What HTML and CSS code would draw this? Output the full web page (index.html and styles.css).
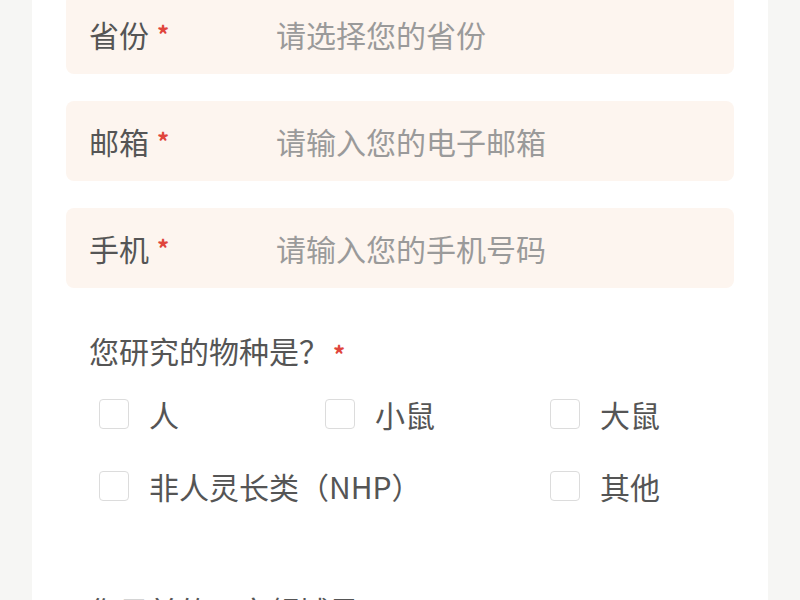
FILE: index.html
```html
<!DOCTYPE html>
<html lang="zh-CN">
<head>
<meta charset="utf-8">
<title>表单</title>
<link rel="stylesheet" href="styles.css">
</head>
<body>
<div class="card">
  <div class="fields">
    <div class="field">
      <span class="label">省份<span class="req">*</span></span>
      <span class="placeholder">请选择您的省份</span>
    </div>
    <div class="field">
      <span class="label">邮箱<span class="req">*</span></span>
      <span class="placeholder">请输入您的电子邮箱</span>
    </div>
    <div class="field">
      <span class="label">手机<span class="req">*</span></span>
      <span class="placeholder">请输入您的手机号码</span>
    </div>
  </div>
  <div class="question">您研究的物种是？<span class="req q-req">*</span></div>
  <div class="options">
    <label class="option"><span class="box"></span><span class="opt-text">人</span></label>
    <label class="option"><span class="box"></span><span class="opt-text">小鼠</span></label>
    <label class="option"><span class="box"></span><span class="opt-text">大鼠</span></label>
    <label class="option span2"><span class="box"></span><span class="opt-text">非人灵长类（NHP）</span></label>
    <label class="option"><span class="box"></span><span class="opt-text">其他</span></label>
  </div>
  <div class="question next">您目前的研究领域是？<span class="req q-req">*</span></div>
</div>
</body>
</html>
```
FILE: styles.css
```css
html, body {
  margin: 0;
  padding: 0;
}
body {
  background: #f6f6f4;
  font-family: "Noto Sans CJK SC", "Noto Sans", sans-serif;
  color: #555;
  overflow: hidden;
  height: 600px;
}
.card {
  background: #fff;
  margin: -6px 32px 0 32px;
  padding: 0 34px 40px 34px;
  min-height: 700px;
}
.fields {
  display: flex;
  flex-direction: column;
  gap: 27px;
}
.field {
  height: 80px;
  background: #fdf5ef;
  border-radius: 8px;
  display: flex;
  align-items: center;
  padding-left: 23px;
  font-size: 30px;
}
.label {
  width: 187px;
  flex: none;
  color: #555;
  display: flex;
  align-items: flex-start;
}
.req {
  color: #e0453c;
  font-size: 24px;
  font-weight: bold;
  line-height: 1;
  margin-left: 8px;
  margin-top: 10px;
}
.placeholder {
  color: #9a9a9a;
}
.question {
  margin-top: 42px;
  padding-left: 23px;
  font-size: 30px;
  line-height: 40px;
  display: flex;
  align-items: flex-start;
}
.q-req {
  margin-left: 4px;
  margin-top: 12px;
}
.options {
  margin-top: 8px;
  padding-left: 33px;
  display: grid;
  grid-template-columns: 226px 225px 225px;
  grid-auto-rows: 72px;
}
.option {
  display: flex;
  align-items: center;
  font-size: 30px;
}
.span2 {
  grid-column: span 2;
}
.box {
  width: 30px;
  height: 30px;
  border: 1.5px solid #dcdcdc;
  border-radius: 4px;
  box-sizing: border-box;
  flex: none;
  margin-right: 20px;
}
.question.next {
  margin-top: 68px;
}
```
